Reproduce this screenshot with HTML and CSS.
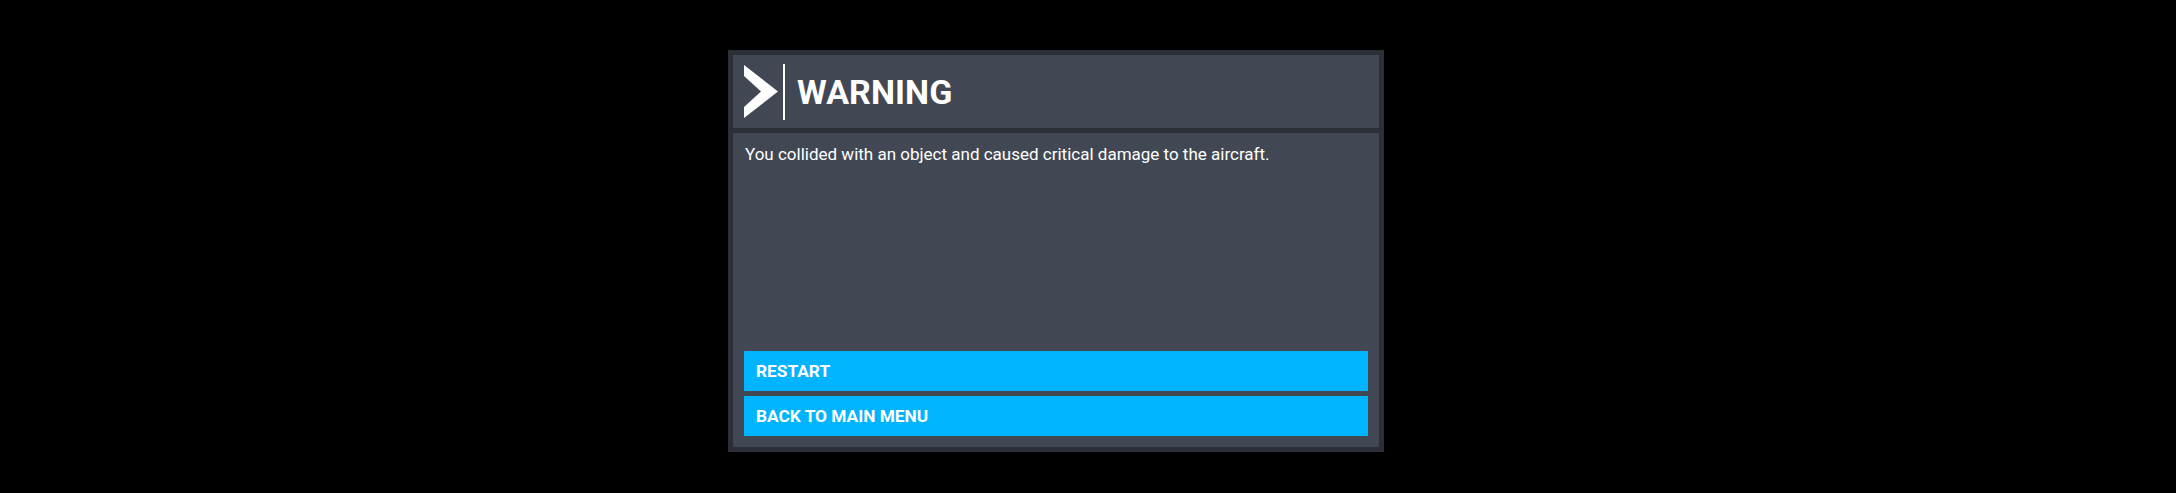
FILE: index.html
```html
<!DOCTYPE html>
<html>
<head>
<meta charset="utf-8">
<link rel="stylesheet" href="styles.css">
</head>
<body>
<div class="dialog">
  <div class="header">
    <svg class="chev" width="34" height="54" viewBox="0 0 34 54">
      <polygon points="0,0 34,26.5 0,53 0,42 17,26.5 0,11" fill="#ffffff"/>
    </svg>
    <div class="divider"></div>
    <div class="title">WARNING</div>
  </div>
  <div class="content">
    <p class="message">You collided with an object and caused critical damage to the aircraft.</p>
    <div class="actions">
      <div class="btn">RESTART</div>
      <div class="btn">BACK TO MAIN MENU</div>
    </div>
  </div>
</div>
</body>
</html>
```

FILE: styles.css
```css
html, body {
  margin: 0;
  padding: 0;
  background: #000000;
  width: 2176px;
  height: 493px;
  overflow: hidden;
}
body {
  display: flex;
  align-items: flex-start;
  padding: 50px 0 0 728px;
  box-sizing: border-box;
  font-family: Roboto, "Liberation Sans", sans-serif;
}
.dialog {
  width: 656px;
  height: 402px;
  box-sizing: border-box;
  background: #2b3038;
  padding: 5px;
  display: flex;
  flex-direction: column;
  gap: 5px;
}
.header {
  height: 73px;
  background: #414853;
  display: flex;
  align-items: center;
  padding: 0 11px;
  box-sizing: border-box;
}
.chev {
  display: block;
  flex: none;
}
.divider {
  width: 2px;
  height: 56px;
  background: #ffffff;
  margin-left: 5px;
  flex: none;
}
.title {
  margin-left: 12px;
  color: #ffffff;
  font-weight: 700;
  font-size: 34px;
  line-height: 38px;
  letter-spacing: 0.1px;
  padding-top: 1px;
}
.content {
  flex: 1;
  background: #414853;
  display: flex;
  flex-direction: column;
  padding: 11px 11px 11px 11px;
  box-sizing: border-box;
}
.message {
  margin: 0;
  padding-left: 1px;
  color: #ffffff;
  font-size: 17px;
  line-height: 20px;
  flex: 1;
}
.actions {
  display: flex;
  flex-direction: column;
  gap: 5px;
}
.btn {
  height: 40px;
  background: #00b4ff;
  color: #ffffff;
  font-weight: 700;
  font-size: 17.3px;
  display: flex;
  align-items: center;
  padding-left: 12px;
}
```
